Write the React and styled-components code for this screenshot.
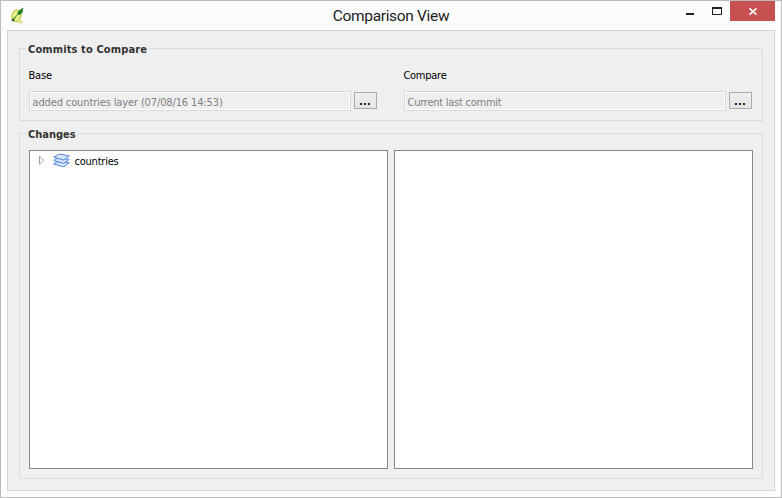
import React from "react";
import styled, { createGlobalStyle } from "styled-components";

const GlobalStyle = createGlobalStyle`
  * { box-sizing: border-box; }
  body { margin: 0; overflow: hidden; }
`;

const Window = styled.div`
  width: 782px;
  height: 498px;
  display: flex;
  flex-direction: column;
  padding: 0 6px 6px;
  border: 1px solid #bbbbbb;
  background: #fcfcfc;
  color: #000;
  font: 11px/14px "DejaVu Sans Condensed", "DejaVu Sans", sans-serif;
  font-stretch: condensed;
  white-space: nowrap;
`;

const TitleBar = styled.header`
  height: 29px;
  flex: none;
  display: grid;
  grid-template-columns: 104px 1fr 104px;
`;

const AppIcon = styled.svg`
  width: 17px;
  height: 18px;
  margin: 6px 0 0 2px;
`;

const Title = styled.h1`
  margin: 0;
  padding-top: 5px;
  text-align: center;
  font-family: Roboto, sans-serif;
  font-size: 15.5px;
  line-height: 20px;
  font-weight: 400;
  font-stretch: normal;
  letter-spacing: ${(p) => p.$tracking};
  color: #222;
`;

const Controls = styled.div`
  display: flex;
  justify-content: flex-end;
`;

const ControlButton = styled.button`
  width: ${(p) => p.$width}px;
  height: 20px;
  padding: 0;
  border: 0;
  background: ${(p) => (p.$danger ? "#c75050" : "transparent")};

  svg { display: block; }
`;

const Client = styled.main`
  flex: 1;
  display: flex;
  flex-direction: column;
  gap: 3px;
  padding: 8px 11px 11px;
  border: 1px solid #d3d3d3;
  background: #efefef;
`;

const Group = styled.section`
  display: flex;
  flex-direction: column;
  height: ${(p) => p.$height}px;
  padding: 0 9px 9px;
  border: 1px solid #dcdcdc;
  margin-top: 9px;
`;

const Legend = styled.h2`
  align-self: flex-start;
  flex: none;
  height: 16px;
  margin: -8px 0 0 -3px;
  padding: 1px 2px 0 2px;
  background: #efefef;
  color: #333;
  font-size: 11px;
  line-height: 15px;
  font-weight: 700;
  letter-spacing: ${(p) => p.$tracking};
`;

const Columns = styled.div`
  display: grid;
  grid-template-columns: 1fr 1fr;
  column-gap: ${(p) => p.$gap}px;
  flex: 1;
  padding-top: ${(p) => p.$top}px;
`;

const Label = styled.div`
  height: 23px;
  margin-left: -0.6px;
  padding-top: 1px;
  letter-spacing: ${(p) => p.$tracking};
`;

const Picker = styled.div`
  display: flex;
  align-items: center;
  gap: 3px;
`;

const Field = styled.div`
  width: 322px;
  height: 20px;
  padding: 4px 2.5px 0;
  border: 1px solid #d9d9d9;
  box-shadow: inset 0 0 0 1px #fff;
  color: #808080;
  letter-spacing: ${(p) => p.$tracking};
`;

const BrowseButton = styled.button`
  width: 23px;
  height: 17px;
  margin-bottom: 1px;
  padding: 1px 1px 0 0;
  border: 1px solid #acacac;
  background: linear-gradient(#efefef, #e5e5e5);
  color: #000;
  font: 700 11px/15px "DejaVu Sans Condensed", "DejaVu Sans", sans-serif;
  letter-spacing: 0.2px;
`;

const Pane = styled.div`
  border: 1px solid #828790;
  background: #fff;
`;

const TreeRow = styled.div`
  display: flex;
  align-items: flex-start;
  height: 19px;
  padding: 2px 0 0 8px;
  letter-spacing: ${(p) => p.$tracking};

  svg { flex: none; }
`;

const RowText = styled.span`
  margin: 2px 0 0 4.4px;
`;

function QgisIcon() {
  return (
    <AppIcon viewBox="0 0 16 17">
      <ellipse cx="7" cy="8.3" rx="4.1" ry="5.3" fill="#f3f58c" stroke="#cdd66a" strokeWidth="1.8" transform="rotate(14 7 8.3)" />
      <path d="M7.5 12.3c1.8-.5 2.7 2 5.3 1.2-.6 2-3.5 1.8-5 .1" fill="#e8ed86" stroke="#cbd47b" strokeWidth=".8" />
      <path d="M3.5 12.5 10.7 4.2" stroke="#529d3c" strokeWidth="1.4" />
      <path d="M6.2 9.8 10.3 5" stroke="#bde6a4" strokeWidth=".8" />
      <path d="m8.8 3.8 4.7-3.3-.7 4.6-2.6 2.5-2.4-1.3z" fill="#238324" />
      <path d="m2 12 2-.6 1.2 1-1.2 1.4z" fill="#263829" />
    </AppIcon>
  );
}

function MinimizeIcon() {
  return (
    <svg width="27" height="20" viewBox="0 0 27 20">
      <path d="M8 12h8v2H8z" fill="#222" />
    </svg>
  );
}

function MaximizeIcon() {
  return (
    <svg width="25" height="20" viewBox="0 0 25 20" shapeRendering="crispEdges">
      <path d="M7 6h10v8H7zM8 8v5h8V8z" fill="#222" fillRule="evenodd" />
    </svg>
  );
}

function CloseIcon() {
  return (
    <svg width="45" height="20" viewBox="0 0 45 20">
      <path d="m19.5 7.3 7 6.4m0-6.4-7 6.4" fill="none" stroke="#fff" strokeWidth="1.6" />
    </svg>
  );
}

function ExpandArrow() {
  return (
    <svg width="15" height="15" viewBox="0 0 15 15">
      <path d="M1.5 3.2v8.1l4.1-4z" fill="#fff" stroke="#a3a3a3" />
    </svg>
  );
}

function LayersIcon() {
  return (
    <svg width="17" height="15" viewBox="0 0 17 15">
      <g fill="#dbe7fc" stroke="#5683dc" strokeWidth="1" strokeLinejoin="round">
        <path d="m.7 11 4-2.5 11.6 1.3-5.8 4z" />
        <path d="m.7 7.6 4-2.5 11.6 1.3-5.8 4z" />
        <path d="M.7 4.2 6.5 1l9.8 2-5.8 4z" />
      </g>
    </svg>
  );
}

function CommitPicker({ label, value, labelTracking, valueTracking }) {
  return (
    <div>
      <Label $tracking={labelTracking}>{label}</Label>
      <Picker>
        <Field $tracking={valueTracking}>{value}</Field>
        <BrowseButton>...</BrowseButton>
      </Picker>
    </div>
  );
}

export default function App() {
  return (
    <>
      <GlobalStyle />
      <Window>
        <TitleBar>
          <QgisIcon />
          <Title $tracking="-0.33px">Comparison View</Title>
          <Controls>
            <ControlButton $width={27} aria-label="Minimize"><MinimizeIcon /></ControlButton>
            <ControlButton $width={25} aria-label="Maximize"><MaximizeIcon /></ControlButton>
            <ControlButton $width={45} $danger aria-label="Close"><CloseIcon /></ControlButton>
          </Controls>
        </TitleBar>
        <Client>
          <Group $height={73}>
            <Legend $tracking="0.12px">Commits to Compare</Legend>
            <Columns $gap={26} $top={11}>
              <CommitPicker label="Base" value="added countries layer (07/08/16 14:53)" labelTracking="-0.15px" valueTracking="-0.13px" />
              <CommitPicker label="Compare" value="Current last commit" labelTracking="-0.25px" valueTracking="-0.25px" />
            </Columns>
          </Group>
          <Group $height={346}>
            <Legend $tracking="0">Changes</Legend>
            <Columns $gap={6} $top={8}>
              <Pane>
                <TreeRow $tracking="-0.2px">
                  <ExpandArrow />
                  <LayersIcon />
                  <RowText>countries</RowText>
                </TreeRow>
              </Pane>
              <Pane />
            </Columns>
          </Group>
        </Client>
      </Window>
    </>
  );
}
